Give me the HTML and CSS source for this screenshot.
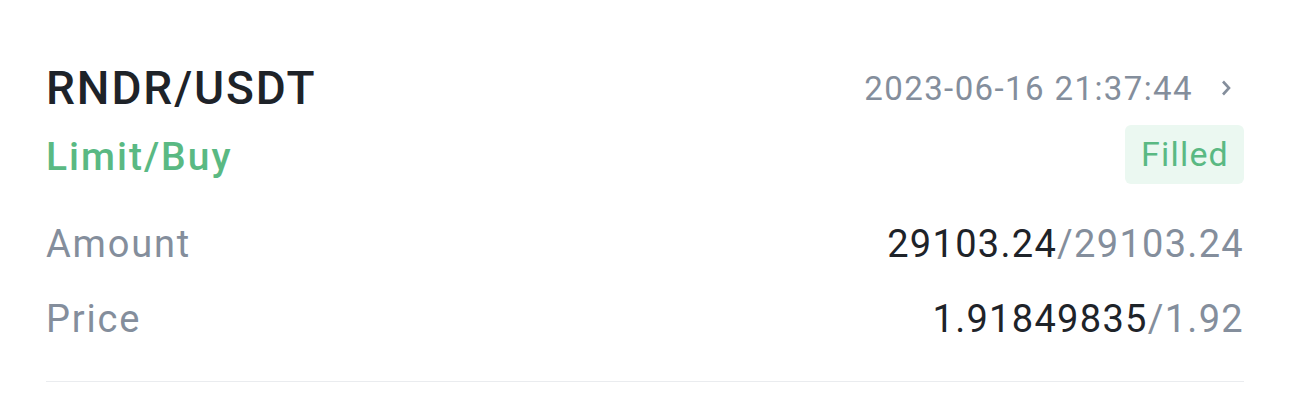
FILE: index.html
```html
<!DOCTYPE html>
<html lang="en">
<head>
  <meta charset="UTF-8" />
  <meta name="viewport" content="width=device-width, initial-scale=1.0" />
  <title>Order History</title>
  <link rel="stylesheet" href="styles.css">
</head>
<body>
  <div class="order">
    <div class="order-head">
      <span class="pair">RNDR/USDT</span>
      <span class="time">2023-06-16 21:37:44
        <svg class="chevron" width="12" height="18" viewBox="0 0 12 18"><path d="M3 2.5 L9 9 L3 15.5" fill="none" stroke="#848e9c" stroke-width="2.6"/></svg>
      </span>
    </div>
    <div class="order-type">
      <span class="side">Limit/Buy</span>
      <span class="status">Filled</span>
    </div>
    <div class="order-row">
      <span class="label">Amount</span>
      <span class="value">29103.24<span class="total">/29103.24</span></span>
    </div>
    <div class="order-row">
      <span class="label">Price</span>
      <span class="value">1.91849835<span class="total">/1.92</span></span>
    </div>
    <div class="divider"></div>
  </div>
</body>
</html>
```

FILE: styles.css
```css
body {
  margin: 0;
  background-color: #fff;
  font-family: Roboto, "Noto Sans", sans-serif;
  color: #1e2329;
}
.order {
  padding: 60px 46px 0;
}
.order-head, .order-type, .order-row {
  display: flex;
  justify-content: space-between;
  align-items: center;
}
.order-head {
  height: 56px;
}
.pair {
  font-size: 46px;
  font-weight: 500;
  letter-spacing: 1.9px;
}
.time {
  display: flex;
  align-items: center;
  gap: 27px;
  font-size: 33px;
  letter-spacing: 1.4px;
  color: #848e9c;
  margin-right: 12px;
}
.chevron {
  display: block;
}
.order-type {
  margin-top: 9px;
  height: 59px;
}
.side {
  font-size: 39px;
  font-weight: 500;
  letter-spacing: 2px;
  color: #5ab983;
  margin-top: 5px;
}
.status {
  background-color: #ebf8f1;
  color: #5ab983;
  font-size: 34px;
  letter-spacing: 1.2px;
  border-radius: 6px;
  padding: 0 15px 0 16px;
  line-height: 59px;
}
.order-row {
  height: 75px;
  font-size: 38px;
  letter-spacing: 1.3px;
}
.order-type + .order-row {
  margin-top: 22px;
}
.label {
  color: #848e9c;
  letter-spacing: 1.8px;
}
.total {
  color: #848e9c;
}
.divider {
  margin-top: 25px;
  height: 1px;
  background-color: #eaecef;
}
```
